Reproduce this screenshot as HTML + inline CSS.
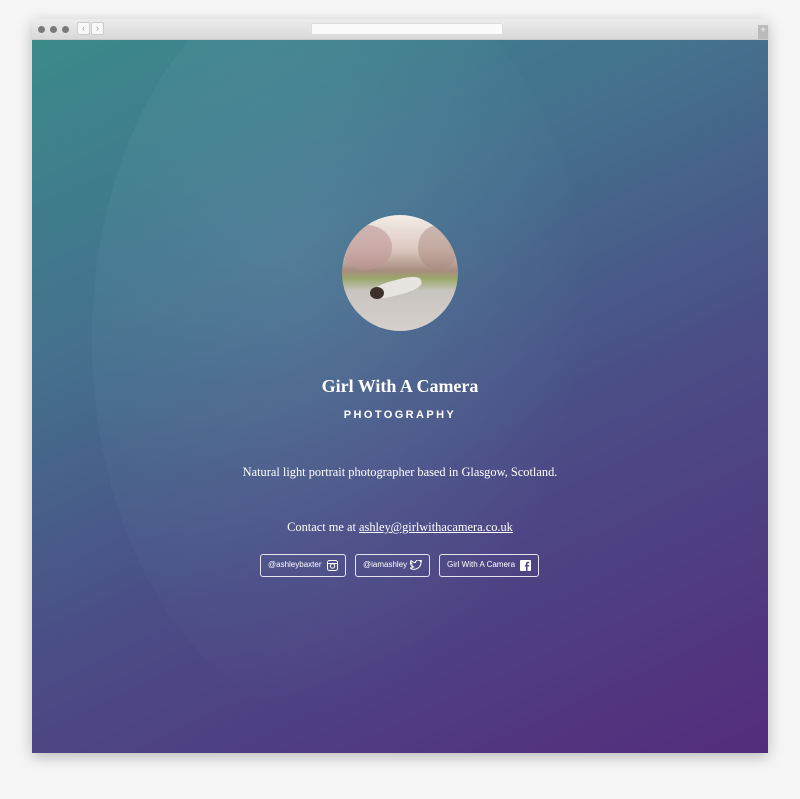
<!DOCTYPE html>
<html><head><meta charset="utf-8"><style>
*{margin:0;padding:0;box-sizing:border-box}
body{width:800px;height:799px;background:#f6f6f6;position:relative;overflow:hidden;font-family:"Liberation Serif",serif}
.win{position:absolute;left:32px;top:19px;width:736px;height:734px;box-shadow:0 4px 14px rgba(0,0,0,.25);background:#fff}
.bar{height:21px;background:linear-gradient(#ececec,#d9d9d9);border-bottom:1px solid #c8c8c8;position:relative}
.dot{position:absolute;top:7px;width:7px;height:7px;border-radius:50%;background:#7a7a7a}
.nav{position:absolute;top:3px;width:13px;height:13px;background:#f8f8f8;border:1px solid #ccc;border-radius:2px;font:9px "Liberation Sans";color:#999;text-align:center;line-height:11px}
.url{position:absolute;left:279px;top:4px;width:192px;height:12px;background:#fbfbfb;border:1px solid #ddd;border-radius:2px}
.plus{position:absolute;right:0;top:6px;width:10px;height:14px;background:#bbb;color:#eee;font:10px "Liberation Sans";text-align:center}
.content{position:absolute;left:0;top:21px;width:736px;height:713px;overflow:hidden;background:linear-gradient(155deg,#3b8a8a 0%,#44728e 30%,#4b4c86 60%,#542c7c 100%)}
.face{position:absolute;left:60px;top:-80px;width:500px;height:760px;border-radius:50%;background:radial-gradient(ellipse at 40% 40%,rgba(140,190,200,.18),rgba(120,170,190,.06) 55%,transparent 70%)}
.av{position:absolute;left:310px;top:175px;width:116px;height:116px;border-radius:50%;overflow:hidden;background:linear-gradient(#f3eee6 0%,#dcc7c0 30%,#a88c80 48%,#9aa86a 55%,#c8c4bf 65%,#d6d0cc 100%)}
.t{position:absolute;width:736px;text-align:center;color:#fff}
.btn{position:absolute;top:514px;height:23px;border:1.5px solid rgba(255,255,255,.85);border-radius:3px;color:#fff;font:8px "Liberation Sans",sans-serif;line-height:20px;padding-left:7px;white-space:nowrap}
.btn svg{position:absolute;right:7px;top:5px}
</style></head><body>
<div class="win">
<div class="bar">
<div class="dot" style="left:6px"></div><div class="dot" style="left:18px"></div><div class="dot" style="left:30px"></div>
<div class="nav" style="left:45px">‹</div><div class="nav" style="left:59px">›</div>
<div class="url"></div><div class="plus">+</div>
</div>
<div class="content">
<div class="face"></div>
<div class="av">
<div style="position:absolute;left:0;top:10px;width:50px;height:45px;border-radius:50%;background:rgba(190,150,150,.6)"></div>
<div style="position:absolute;right:0;top:10px;width:40px;height:45px;border-radius:50%;background:rgba(170,140,130,.5)"></div>
<div style="position:absolute;left:30px;top:65px;width:50px;height:15px;border-radius:40%;background:#e8e4e0;transform:rotate(-15deg)"></div>
<div style="position:absolute;left:28px;top:72px;width:14px;height:12px;border-radius:50%;background:#3c302a"></div>
</div>
<div class="t" style="top:336px;font-size:18px;font-weight:bold">Girl With A Camera</div>
<div class="t" style="top:369px;font:bold 11px 'Liberation Sans',sans-serif;letter-spacing:2.4px">PHOTOGRAPHY</div>
<div class="t" style="top:425px;font-size:12.4px">Natural light portrait photographer based in Glasgow, Scotland.</div>
<div class="t" style="top:480px;font-size:12.4px">Contact me at <u>ashley@girlwithacamera.co.uk</u></div>
<div class="btn" style="left:228px;width:86px">@ashleybaxter<svg width="11" height="11" viewBox="0 0 11 11"><rect x=".5" y=".5" width="10" height="10" rx="2" fill="none" stroke="#fff"/><circle cx="5.5" cy="6" r="2.2" fill="none" stroke="#fff"/><rect x="1" y="3" width="9" height="1" fill="#fff"/></svg></div>
<div class="btn" style="left:323px;width:75px">@iamashley<svg width="12" height="10" viewBox="0 0 24 20"><path d="M23 2a9 9 0 0 1-3 1 5 5 0 0 0 2-3 9 9 0 0 1-3 1 5 5 0 0 0-8 4A13 13 0 0 1 2 1a5 5 0 0 0 1 6 4 4 0 0 1-2-1 5 5 0 0 0 4 5 4 4 0 0 1-2 0 5 5 0 0 0 4 3A10 10 0 0 1 0 16a14 14 0 0 0 22-12 9 9 0 0 0 1-2z" fill="none" stroke="#fff" stroke-width="2"/></svg></div>
<div class="btn" style="left:407px;width:100px">Girl With A Camera<svg width="11" height="11" viewBox="0 0 11 11"><rect width="11" height="11" rx="1" fill="#fff"/><path d="M7.5 11V6.5H9L9.2 5H7.5V4c0-.5.2-.8.8-.8h.9V1.8H8C6.7 1.8 6 2.5 6 3.8V5H4.8v1.5H6V11z" fill="#4d4a88"/></svg></div>
</div>
</div>
</body></html>
